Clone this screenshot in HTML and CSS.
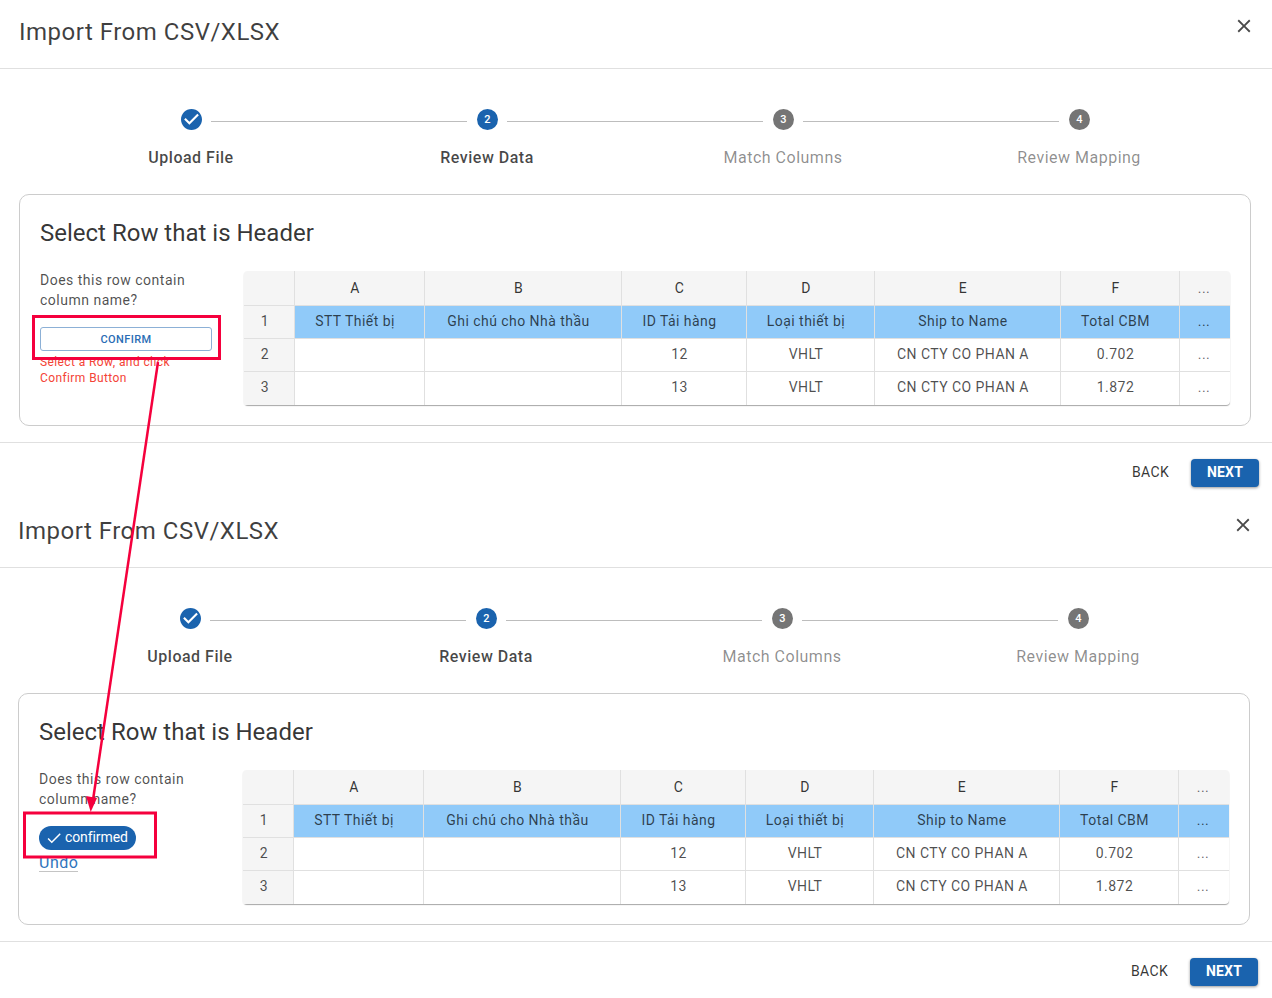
FILE: index.html
```html
<!DOCTYPE html>
<html lang="en">
<head>
<meta charset="utf-8">
<title>Import From CSV/XLSX</title>
<link rel="stylesheet" href="styles.css">
</head>
<body>
<div class="page">
  <section class="panel panel--first">
    <header class="head">
      <h2 class="title">Import From CSV/XLSX</h2>
      <button class="close" aria-label="Close"><svg viewBox="0 0 24 24" width="22" height="22"><path d="M19 6.41 17.59 5 12 10.59 6.41 5 5 6.41 10.59 12 5 17.59 6.41 19 12 13.41 17.59 19 19 17.59 13.41 12z"/></svg></button>
    </header>
    <div class="content">
      <ol class="stepper">
        <li class="step">
          <div class="step-row"><span class="seg seg--none"></span><svg class="step-check" viewBox="2 2 20 20" width="21" height="21"><path d="M12 2C6.48 2 2 6.48 2 12s4.48 10 10 10 10-4.48 10-10S17.52 2 12 2zm-2 15-5-5 1.41-1.41L10 14.17l7.59-7.59L19 8l-9 9z"/></svg><span class="seg"></span></div>
          <div class="step-label">Upload File</div>
        </li>
        <li class="step">
          <div class="step-row"><span class="seg"></span><span class="num num--on">2</span><span class="seg"></span></div>
          <div class="step-label">Review Data</div>
        </li>
        <li class="step step--off">
          <div class="step-row"><span class="seg"></span><span class="num">3</span><span class="seg"></span></div>
          <div class="step-label">Match Columns</div>
        </li>
        <li class="step step--off">
          <div class="step-row"><span class="seg"></span><span class="num">4</span><span class="seg seg--none"></span></div>
          <div class="step-label">Review Mapping</div>
        </li>
      </ol>
      <div class="card">
        <h3 class="card-title">Select Row that is Header</h3>
        <div class="card-body">
          <div class="side">
            <p class="question">Does this row contain column name?</p>
            <button class="confirm">Confirm</button>
            <p class="hint">Select a Row, and click Confirm Button</p>
          </div>
          <table class="sheet">
            <thead><tr><th></th><th>A</th><th>B</th><th>C</th><th>D</th><th>E</th><th>F</th><th class="more">...</th></tr></thead>
            <tbody>
              <tr class="picked"><th>1</th><td>STT Thiết bị</td><td>Ghi chú cho Nhà thầu</td><td>ID Tải hàng</td><td>Loại thiết bị</td><td>Ship to Name</td><td>Total CBM</td><td class="more">...</td></tr>
              <tr><th>2</th><td></td><td></td><td>12</td><td>VHLT</td><td>CN CTY CO PHAN A</td><td>0.702</td><td class="more">...</td></tr>
              <tr><th>3</th><td></td><td></td><td>13</td><td>VHLT</td><td>CN CTY CO PHAN A</td><td>1.872</td><td class="more">...</td></tr>
            </tbody>
          </table>
        </div>
      </div>
    </div>
    <footer class="foot">
      <button class="back">Back</button>
      <button class="next">Next</button>
    </footer>
  </section>

  <section class="panel panel--second">
    <header class="head">
      <h2 class="title">Import From CSV/XLSX</h2>
      <button class="close" aria-label="Close"><svg viewBox="0 0 24 24" width="22" height="22"><path d="M19 6.41 17.59 5 12 10.59 6.41 5 5 6.41 10.59 12 5 17.59 6.41 19 12 13.41 17.59 19 19 17.59 13.41 12z"/></svg></button>
    </header>
    <div class="content">
      <ol class="stepper">
        <li class="step">
          <div class="step-row"><span class="seg seg--none"></span><svg class="step-check" viewBox="2 2 20 20" width="21" height="21"><path d="M12 2C6.48 2 2 6.48 2 12s4.48 10 10 10 10-4.48 10-10S17.52 2 12 2zm-2 15-5-5 1.41-1.41L10 14.17l7.59-7.59L19 8l-9 9z"/></svg><span class="seg"></span></div>
          <div class="step-label">Upload File</div>
        </li>
        <li class="step">
          <div class="step-row"><span class="seg"></span><span class="num num--on">2</span><span class="seg"></span></div>
          <div class="step-label">Review Data</div>
        </li>
        <li class="step step--off">
          <div class="step-row"><span class="seg"></span><span class="num">3</span><span class="seg"></span></div>
          <div class="step-label">Match Columns</div>
        </li>
        <li class="step step--off">
          <div class="step-row"><span class="seg"></span><span class="num">4</span><span class="seg seg--none"></span></div>
          <div class="step-label">Review Mapping</div>
        </li>
      </ol>
      <div class="card">
        <h3 class="card-title">Select Row that is Header</h3>
        <div class="card-body">
          <div class="side">
            <p class="question">Does this row contain column name?</p>
            <span class="chip"><svg viewBox="0 0 24 24" width="18" height="18"><path d="M9 16.17 4.83 12l-1.42 1.41L9 19 21 7l-1.41-1.41z"/></svg><span class="chip-text">confirmed</span></span>
            <a class="undo" href="#">Undo</a>
          </div>
          <table class="sheet">
            <thead><tr><th></th><th>A</th><th>B</th><th>C</th><th>D</th><th>E</th><th>F</th><th class="more">...</th></tr></thead>
            <tbody>
              <tr class="picked"><th>1</th><td>STT Thiết bị</td><td>Ghi chú cho Nhà thầu</td><td>ID Tải hàng</td><td>Loại thiết bị</td><td>Ship to Name</td><td>Total CBM</td><td class="more">...</td></tr>
              <tr><th>2</th><td></td><td></td><td>12</td><td>VHLT</td><td>CN CTY CO PHAN A</td><td>0.702</td><td class="more">...</td></tr>
              <tr><th>3</th><td></td><td></td><td>13</td><td>VHLT</td><td>CN CTY CO PHAN A</td><td>1.872</td><td class="more">...</td></tr>
            </tbody>
          </table>
        </div>
      </div>
    </div>
    <footer class="foot">
      <button class="back">Back</button>
      <button class="next">Next</button>
    </footer>
  </section>

  <svg class="marks" viewBox="0 0 1272 998" width="1272" height="998" aria-hidden="true">
    <rect class="mark-box" x="33.5" y="316.5" width="186" height="42"/>
    <rect class="mark-box" x="24.5" y="813" width="131" height="44"/>
    <line class="mark-line" x1="158" y1="362" x2="93" y2="800"/>
    <polygon class="mark-head" points="90.7,812 86,796 97,798"/>
  </svg>
</div>
</body>
</html>
```
FILE: styles.css
```css
* { box-sizing: border-box; }
html, body { margin: 0; padding: 0; background: #fff; }
body { font-family: Roboto, "Liberation Sans", sans-serif; color: rgba(0,0,0,.87); overflow: hidden; }
.page { position: relative; width: 1272px; height: 998px; overflow: hidden; }

.panel { height: 499px; display: flex; flex-direction: column; }
.panel--first { --left: 19px; --right: 21px; }
.panel--second { --left: 18px; --right: 22px; }

.head { height: 69px; border-bottom: 1px solid #e0e0e0; padding: 0 16px 0 var(--left); display: flex; justify-content: space-between; }
.title { margin: 16px 0 0; font-size: 24px; line-height: 32px; font-weight: 400; letter-spacing: .5px; color: rgba(0,0,0,.75); }
.close { border: 0; background: none; padding: 1px; width: 24px; height: 24px; margin: 14px calc(var(--right) - 21px) 0 0; }
.close svg { display: block; fill: #4a4a4a; }

.content { padding: 0 var(--right) 0 var(--left); }

.stepper { list-style: none; margin: 0; padding: 40px 24px 0; display: grid; grid-template-columns: repeat(4, 296px); }
.step { display: flex; flex-direction: column; align-items: stretch; }
.step-row { display: flex; align-items: flex-start; height: 21px; }
.seg { flex: 1; height: 1px; background: #bdbdbd; margin-top: 12px; margin-left: 9px; }
.seg:first-child { flex: none; width: 128px; margin-left: 0; margin-right: 10px; }
.seg--none { background: none; }
.step-check { fill: #1a63ae; display: block; flex: none; }
.num { flex: none; width: 21px; height: 21px; border-radius: 50%; background: #757575; color: #fff; font-size: 11px; font-weight: 500; line-height: 21px; text-align: center; }
.num--on { background: #1a63ae; }
.step-label { margin-top: 18px; text-align: center; font-size: 16px; line-height: 20px; font-weight: 500; letter-spacing: .5px; color: rgba(0,0,0,.72); }
.step--off .step-label { color: rgba(0,0,0,.45); font-weight: 400; }

.card { margin-top: 26px; height: 232px; border: 1px solid #ccc; border-radius: 10px; padding: 20px 20px 0; }
.card-title { margin: 0; font-size: 24px; line-height: 36px; font-weight: 400; letter-spacing: 0; color: rgba(0,0,0,.8); }
.card-body { display: flex; margin-top: 19px; }
.side { width: 204px; flex: none; }
.question { margin: 0; width: 172px; font-size: 14px; line-height: 20px; letter-spacing: .5px; color: rgba(0,0,0,.7); }
.confirm { display: block; width: 172px; height: 24px; margin-top: 17px; padding: 1px 0 0; border: 1px solid #8cb0d6; border-radius: 3px; background: #fff; color: #2a6db5; font: 500 11px/21px Roboto, sans-serif; letter-spacing: .4px; text-transform: uppercase; }
.hint { margin: 3px 0 0; width: 150px; font-size: 12px; line-height: 16px; letter-spacing: .4px; color: #f44336; }
.chip { display: flex; width: 97px; align-items: center; height: 24px; margin-top: 17px; padding: 0 0 0 6px; border-radius: 12px; background: #1a63ae; color: #fff; font-size: 14px; letter-spacing: -.1px; }
.chip svg { fill: #fff; margin-right: 2px; flex: none; }
.chip-text { margin-bottom: 2px; }
.undo { display: block; width: 39px; height: 21px; margin-top: 1px; font-size: 16px; line-height: 24px; font-weight: 400; letter-spacing: .5px; color: #2f74bc; text-decoration: none; border-bottom: 1px solid #c4c4c4; overflow: hidden; }

.sheet { width: 986px; flex: none; table-layout: fixed; border-collapse: separate; border-spacing: 0; margin-top: 1px; border-radius: 4px; box-shadow: 0 1px 1px rgba(0,0,0,.35); align-self: flex-start; font-size: 14px; letter-spacing: .45px; color: rgba(0,0,0,.7); }
.sheet th, .sheet td { height: 33px; padding: 0 9px 2px 0; text-align: center; font-weight: 400; border-right: 1px solid #e0e0e0; border-bottom: 1px solid #e0e0e0; }
.sheet tr > :first-child { padding-right: 8px; }
.sheet tr > :last-child { border-right: 0; padding-right: 2px; }
.sheet tbody tr:last-child > * { border-bottom: 0; padding-bottom: 3px; }
.sheet thead th { height: 35px; padding-bottom: 0; background: #f5f5f5; color: rgba(0,0,0,.8); }
.sheet tbody th { background: #f5f5f5; }
.sheet tr > :nth-child(1) { width: 51px; }
.sheet tr > :nth-child(2) { width: 130px; }
.sheet tr > :nth-child(3) { width: 197px; }
.sheet tr > :nth-child(4) { width: 125px; }
.sheet tr > :nth-child(5) { width: 128px; }
.sheet tr > :nth-child(6) { width: 186px; }
.sheet tr > :nth-child(7) { width: 119px; }
.sheet tr > :nth-child(8) { width: 50px; }
.sheet .picked td { background: #90caf9; color: rgba(0,0,0,.7); }
.sheet .more { color: rgba(0,0,0,.6); }
.sheet thead th:first-child { border-top-left-radius: 4px; }
.sheet thead th:last-child { border-top-right-radius: 4px; }

.foot { margin-top: 16px; height: 57px; border-top: 1px solid #e0e0e0; padding: 16px 13px 0 0; display: flex; justify-content: flex-end; align-items: flex-start; }
.panel--second .foot { padding-right: 14px; }
.back, .next { height: 28px; padding: 0 0 2px; border: 0; font: 500 14px/26px Roboto, sans-serif; text-transform: uppercase; }
.back { width: 57px; margin-right: 12px; background: none; color: rgba(0,0,0,.8); font-weight: 400; letter-spacing: .35px; }
.next { width: 68px; border-radius: 4px; background: #1a63ae; color: #fff; letter-spacing: .2px; font-weight: 700; box-shadow: 0 1px 3px rgba(0,0,0,.4); }

.marks { position: absolute; left: 0; top: 0; pointer-events: none; }
.mark-box { fill: none; stroke: #f5003d; stroke-width: 3; }
.mark-line { stroke: #f5003d; stroke-width: 2.5; }
.mark-head { fill: #f5003d; }
```
